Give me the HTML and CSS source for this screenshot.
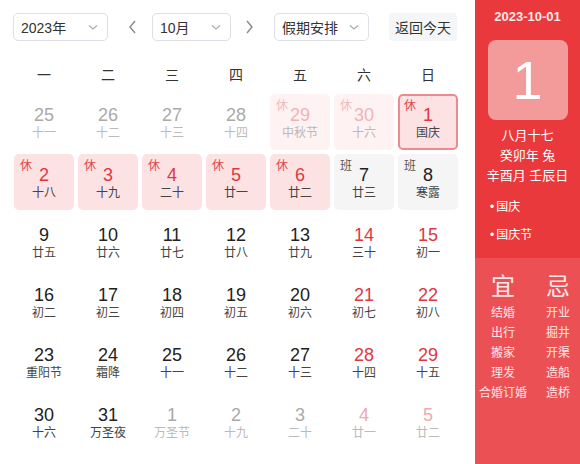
FILE: index.html
```html
<!DOCTYPE html>
<html lang="zh">
<head>
<meta charset="utf-8">
<link rel="stylesheet" href="styles.css">
</head>
<body>
<div class="app">
  <div class="main">
    <div class="toolbar">
      <div class="select sel-year"><span>2023年</span><svg class="chev" viewBox="0 0 12 12"><path d="M2 4.5 L6 8 L10 4.5"/></svg></div>
      <svg class="arrow prev" viewBox="0 0 12 16"><path d="M8 2 L3 8 L8 14"/></svg>
      <div class="select sel-month"><span>10月</span><svg class="chev" viewBox="0 0 12 12"><path d="M2 4.5 L6 8 L10 4.5"/></svg></div>
      <svg class="arrow next" viewBox="0 0 12 16"><path d="M4 2 L9 8 L4 14"/></svg>
      <div class="select sel-holiday"><span>假期安排</span><svg class="chev" viewBox="0 0 12 12"><path d="M2 4.5 L6 8 L10 4.5"/></svg></div>
      <div class="btn-today">返回今天</div>
    </div>
    <div class="weekdays">
      <div>一</div><div>二</div><div>三</div><div>四</div><div>五</div><div>六</div><div>日</div>
    </div>
    <div class="grid">
      <div class="cell other"><span class="num">25</span><span class="lunar">十一</span></div>
      <div class="cell other"><span class="num">26</span><span class="lunar">十二</span></div>
      <div class="cell other"><span class="num">27</span><span class="lunar">十三</span></div>
      <div class="cell other"><span class="num">28</span><span class="lunar">十四</span></div>
      <div class="cell other rest"><span class="tag">休</span><span class="num">29</span><span class="lunar">中秋节</span></div>
      <div class="cell other rest"><span class="tag">休</span><span class="num">30</span><span class="lunar">十六</span></div>
      <div class="cell rest selected"><span class="tag">休</span><span class="num">1</span><span class="lunar">国庆</span></div>

      <div class="cell rest"><span class="tag">休</span><span class="num">2</span><span class="lunar">十八</span></div>
      <div class="cell rest"><span class="tag">休</span><span class="num">3</span><span class="lunar">十九</span></div>
      <div class="cell rest"><span class="tag">休</span><span class="num">4</span><span class="lunar">二十</span></div>
      <div class="cell rest"><span class="tag">休</span><span class="num">5</span><span class="lunar">廿一</span></div>
      <div class="cell rest"><span class="tag">休</span><span class="num">6</span><span class="lunar">廿二</span></div>
      <div class="cell work"><span class="tag">班</span><span class="num">7</span><span class="lunar">廿三</span></div>
      <div class="cell work"><span class="tag">班</span><span class="num">8</span><span class="lunar">寒露</span></div>

      <div class="cell"><span class="num">9</span><span class="lunar">廿五</span></div>
      <div class="cell"><span class="num">10</span><span class="lunar">廿六</span></div>
      <div class="cell"><span class="num">11</span><span class="lunar">廿七</span></div>
      <div class="cell"><span class="num">12</span><span class="lunar">廿八</span></div>
      <div class="cell"><span class="num">13</span><span class="lunar">廿九</span></div>
      <div class="cell weekend"><span class="num">14</span><span class="lunar">三十</span></div>
      <div class="cell weekend"><span class="num">15</span><span class="lunar">初一</span></div>

      <div class="cell"><span class="num">16</span><span class="lunar">初二</span></div>
      <div class="cell"><span class="num">17</span><span class="lunar">初三</span></div>
      <div class="cell"><span class="num">18</span><span class="lunar">初四</span></div>
      <div class="cell"><span class="num">19</span><span class="lunar">初五</span></div>
      <div class="cell"><span class="num">20</span><span class="lunar">初六</span></div>
      <div class="cell weekend"><span class="num">21</span><span class="lunar">初七</span></div>
      <div class="cell weekend"><span class="num">22</span><span class="lunar">初八</span></div>

      <div class="cell"><span class="num">23</span><span class="lunar">重阳节</span></div>
      <div class="cell"><span class="num">24</span><span class="lunar">霜降</span></div>
      <div class="cell"><span class="num">25</span><span class="lunar">十一</span></div>
      <div class="cell"><span class="num">26</span><span class="lunar">十二</span></div>
      <div class="cell"><span class="num">27</span><span class="lunar">十三</span></div>
      <div class="cell weekend"><span class="num">28</span><span class="lunar">十四</span></div>
      <div class="cell weekend"><span class="num">29</span><span class="lunar">十五</span></div>

      <div class="cell"><span class="num">30</span><span class="lunar">十六</span></div>
      <div class="cell"><span class="num">31</span><span class="lunar">万圣夜</span></div>
      <div class="cell other"><span class="num">1</span><span class="lunar">万圣节</span></div>
      <div class="cell other"><span class="num">2</span><span class="lunar">十九</span></div>
      <div class="cell other"><span class="num">3</span><span class="lunar">二十</span></div>
      <div class="cell other weekend"><span class="num">4</span><span class="lunar">廿一</span></div>
      <div class="cell other weekend"><span class="num">5</span><span class="lunar">廿二</span></div>
    </div>
  </div>
  <div class="side">
    <div class="side-top">
      <div class="date">2023-10-01</div>
      <div class="bigday">1</div>
      <div class="info">
        <div>八月十七</div>
        <div>癸卯年 兔</div>
        <div>辛酉月 壬辰日</div>
      </div>
      <ul class="fest">
        <li>国庆</li>
        <li>国庆节</li>
      </ul>
    </div>
    <div class="side-bottom">
      <div class="col yi">
        <div class="head">宜</div>
        <div>结婚</div>
        <div>出行</div>
        <div>搬家</div>
        <div>理发</div>
        <div>合婚订婚</div>
      </div>
      <div class="col ji">
        <div class="head">忌</div>
        <div>开业</div>
        <div>掘井</div>
        <div>开渠</div>
        <div>造船</div>
        <div>造桥</div>
      </div>
    </div>
  </div>
</div>
</body>
</html>
```

FILE: styles.css
```css
* { box-sizing: border-box; }
html, body { margin: 0; padding: 0; }
body {
  width: 580px;
  height: 464px;
  overflow: hidden;
  background: #fff;
  font-family: "Liberation Sans", "Noto Sans CJK SC", sans-serif;
  color: #333;
}
.app {
  display: flex;
  width: 580px;
  height: 464px;
}
.main {
  width: 475px;
  flex: none;
}
.toolbar {
  display: flex;
  align-items: center;
  height: 28px;
  margin-top: 13px;
  padding-left: 13px;
}
.select {
  height: 28px;
  border: 1px solid #dcdfe6;
  border-radius: 5px;
  display: flex;
  align-items: center;
  justify-content: space-between;
  padding: 0 8px 0 7px;
  font-size: 14px;
  color: #333;
}
.sel-year { width: 95px; }
.sel-month { width: 79px; }
.sel-holiday { width: 95px; margin-left: 19px; }
.chev {
  width: 12px;
  height: 12px;
  fill: none;
  stroke: #a8abb2;
  stroke-width: 1.2;
}
.arrow {
  width: 12px;
  height: 16px;
  fill: none;
  stroke: #888;
  stroke-width: 1.4;
}
.prev { margin: 0 13px 0 19px; }
.next { margin: 0 0 0 12px; }
.btn-today {
  margin-left: 20px;
  height: 28px;
  padding: 0 6px;
  display: flex;
  align-items: center;
  background: #f5f6f7;
  border-radius: 4px;
  font-size: 14px;
  color: #333;
}
.weekdays {
  display: grid;
  grid-template-columns: repeat(7, 60px);
  column-gap: 4px;
  padding-left: 14px;
  margin-top: 19px;
  height: 28px;
  align-items: center;
  font-size: 14px;
  color: #333;
}
.weekdays div { text-align: center; }
.grid {
  display: grid;
  grid-template-columns: repeat(7, 60px);
  grid-auto-rows: 56px;
  gap: 4px;
  padding-left: 14px;
  margin-top: 6px;
}
.cell {
  position: relative;
  border-radius: 5px;
  display: flex;
  flex-direction: column;
  align-items: center;
  padding-top: 11px;
}
.num {
  font-size: 18px;
  line-height: 20px;
  color: #222;
}
.lunar {
  font-size: 12px;
  line-height: 16px;
  color: #444;
}
.tag {
  position: absolute;
  top: 4px;
  left: 6px;
  font-size: 12px;
  line-height: 16px;
}
.weekend .num { color: #e0383e; }
.rest { background: #fde2e4; }
.rest .num { color: #e0383e; }
.rest .tag { color: #e0454a; }
.work { background: #f5f5f6; }
.work .tag { color: #555; }
.selected { border: 2px solid #ec8b8f; padding-top: 9px; }
.selected .tag { top: 2px; left: 4px; }
.other .num { color: #aaa; }
.other .lunar { color: #bbb; }
.other.weekend .num { color: #eeaaae; }
.other.rest { background: #fff2f3; }
.other.rest .num { color: #efb3b7; }
.other.rest .tag { color: #f2b9bc; }
.other.rest .lunar { color: #b9b9b9; }

.side {
  width: 105px;
  flex: none;
  display: flex;
  flex-direction: column;
  color: #fff;
}
.side-top {
  background: #e9393c;
  height: 258px;
  display: flex;
  flex-direction: column;
  align-items: center;
  padding-top: 9px;
}
.date {
  font-size: 13px;
  font-weight: bold;
  line-height: 16px;
  color: #fbe8e8;
}
.bigday {
  margin-top: 15px;
  width: 80px;
  height: 80px;
  border-radius: 8px;
  background: #f39a9b;
  display: flex;
  align-items: center;
  justify-content: center;
  font-size: 54px;
  color: #fff;
}
.info {
  margin-top: 6px;
  text-align: center;
  font-size: 13px;
  line-height: 20px;
}
.fest {
  list-style: none;
  margin: 13px 0 0 0;
  padding: 0 0 0 15px;
  align-self: stretch;
  font-size: 12px;
  line-height: 16px;
}
.fest li { margin-bottom: 12px; }
.fest li::before {
  content: "•";
  margin-right: 2px;
}
.side-bottom {
  flex: 1;
  background: #eb5154;
  display: flex;
  padding-top: 14px;
}
.col {
  display: flex;
  flex-direction: column;
  font-size: 12px;
  line-height: 20px;
  color: #fde8e8;
}
.col .head {
  font-size: 24px;
  line-height: 30px;
  margin-bottom: 1px;
}
.yi {
  width: 56px;
  align-items: center;
}
.ji {
  padding-left: 15px;
  align-items: flex-start;
}
```
